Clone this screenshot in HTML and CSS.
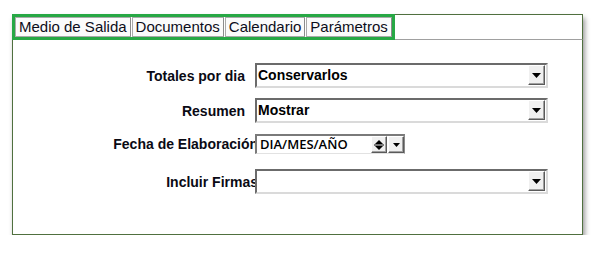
FILE: index.html
```html
<!doctype html>
<html>

<head>
    <link rel="stylesheet" href="styles.css">
</head>

<body>
    <div class="panel">
        <div class="tabbar">
            <div class="tabs">
                <div class="tab">Medio de Salida</div>
                <div class="tab">Documentos</div>
                <div class="tab">Calendario</div>
                <div class="tab">Parámetros</div>
            </div>
            <div class="tabbar-rest"></div>
        </div>

        <div class="form">
            <div class="label"><span>Totales por dia</span></div>
            <div class="combo">
                <span class="combo-value">Conservarlos</span>
                <span class="combo-btn"><svg width="9" height="5" viewBox="0 0 9 5"><path d="M0 0h9L4.5 5z" fill="#000"/></svg></span>
            </div>

            <div class="label"><span>Resumen</span></div>
            <div class="combo">
                <span class="combo-value">Mostrar</span>
                <span class="combo-btn"><svg width="9" height="5" viewBox="0 0 9 5"><path d="M0 0h9L4.5 5z" fill="#000"/></svg></span>
            </div>

            <div class="label label-tight"><span>Fecha de Elaboración</span></div>
            <div class="date">
                <span class="date-value">DIA/MES/AÑO</span>
                <span class="spin"><svg width="12" height="14" viewBox="0 0 12 14"><path d="M2 6h8L6 2z M2 8h8L6 12z" fill="#000"/><path d="M1 7h10" stroke="#000" stroke-width="1"/></svg></span>
                <span class="date-btn"><svg width="7" height="4" viewBox="0 0 7 4"><path d="M0 0h7L3.5 4z" fill="#000"/></svg></span>
            </div>

            <div class="label label-tight"><span>Incluir Firmas</span></div>
            <div class="combo">
                <span class="combo-value"></span>
                <span class="combo-btn"><svg width="9" height="5" viewBox="0 0 9 5"><path d="M0 0h9L4.5 5z" fill="#000"/></svg></span>
            </div>
        </div>
    </div>
</body>

</html>
```

FILE: styles.css
```css
body {
    margin: 0;
    background: #fff;
    font-family: "Liberation Sans", Arial, sans-serif;
    color: #000;
}

.panel {
    box-sizing: border-box;
    width: 571px;
    height: 221px;
    margin: 14px 0 0 12px;
    border: 1px solid #50703f;
    background: #fff;
    box-shadow: 2px 4px 5px rgba(0, 0, 0, 0.4);
}

.tabbar {
    display: flex;
    margin: -1px -1px 0 -1px;
}

.tabs {
    display: flex;
    gap: 1px;
    border: 3px solid #27a845;
    background: #fff;
}

.tab {
    padding: 0 3px;
    border: 1px solid #aaa;
    border-right-color: #8c8c8c;
    background: #fbfbfb;
    color: #0d0d1a;
    font-size: 15px;
    line-height: 18px;
    white-space: nowrap;
}

.tabbar-rest {
    flex: 1;
    border-bottom: 1px solid #a0a0a0;
    border-top: 1px solid #50703f;
    border-right: 1px solid #50703f;
}

.form {
    display: grid;
    grid-template-columns: 242px 293px;
    grid-template-rows: 35px 35px 32px 43px;
    align-items: center;
    padding-top: 18px;
}

.label {
    display: flex;
    justify-content: flex-end;
    padding-right: 10px;
    font-size: 14px;
    font-weight: bold;
    white-space: nowrap;
    color: #0a0a14;
}

.label-tight {
    padding-right: 0;
}

.label-tight span {
    margin-right: -3px;
}

.combo,
.date {
    position: relative;
    z-index: 1;
    display: flex;
    box-sizing: border-box;
    background: #fff;
    border: 2px solid;
    border-color: #6b6b6b #dadada #dadada #6b6b6b;
}

.combo {
    height: 25px;
    padding: 0 1px 1px 0;
}

.combo-value {
    flex: 1;
    padding-left: 1px;
    font-size: 14px;
    font-weight: bold;
    line-height: 20px;
}

.combo-btn,
.spin,
.date-btn {
    display: flex;
    align-items: center;
    justify-content: center;
    box-sizing: border-box;
    width: 17px;
    background: #f0f0f0;
    border: 1px solid;
    border-color: #fff #5a5a5a #5a5a5a #fff;
    box-shadow: inset -1px -1px 0 #a0a0a0;
}

.date {
    width: 150px;
    height: 20px;
    border-width: 2px 1px 1px 2px;
    border-color: #7a7a7a #8a8a8a #e2e2e2 #7a7a7a;
}

.date-value {
    flex: 1;
    padding-left: 3px;
    font-family: "Open Sans", sans-serif;
    font-size: 13px;
    font-weight: 600;
    line-height: 17px;
}

.spin {
    width: 16px;
    margin-right: 1px;
}

.date-btn {
    width: 16px;
}
```
